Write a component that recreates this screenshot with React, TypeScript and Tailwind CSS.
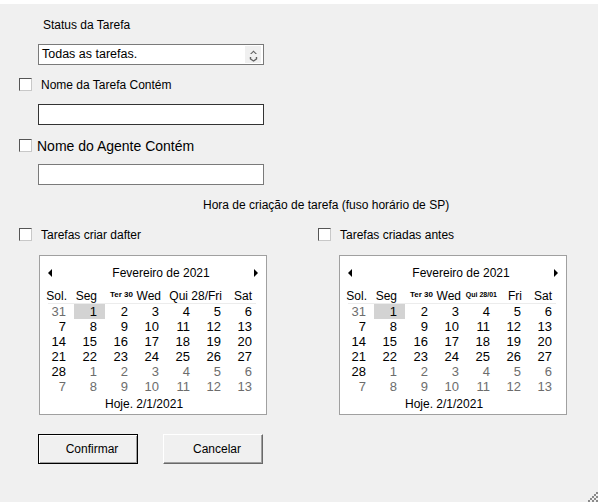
import React from "react";

type Day = { n: number; muted?: boolean; selected?: boolean };

const weeks: Day[][] = [
  [{ n: 31, muted: true }, { n: 1, selected: true }, { n: 2 }, { n: 3 }, { n: 4 }, { n: 5 }, { n: 6 }],
  [{ n: 7 }, { n: 8 }, { n: 9 }, { n: 10 }, { n: 11 }, { n: 12 }, { n: 13 }],
  [{ n: 14 }, { n: 15 }, { n: 16 }, { n: 17 }, { n: 18 }, { n: 19 }, { n: 20 }],
  [{ n: 21 }, { n: 22 }, { n: 23 }, { n: 24 }, { n: 25 }, { n: 26 }, { n: 27 }],
  [
    { n: 28 },
    { n: 1, muted: true },
    { n: 2, muted: true },
    { n: 3, muted: true },
    { n: 4, muted: true },
    { n: 5, muted: true },
    { n: 6, muted: true },
  ],
  [
    { n: 7, muted: true },
    { n: 8, muted: true },
    { n: 9, muted: true },
    { n: 10, muted: true },
    { n: 11, muted: true },
    { n: 12, muted: true },
    { n: 13, muted: true },
  ],
];

function Checkbox() {
  return (
    <span className="block w-[13px] h-[13px] bg-white border border-t-[#555] border-l-[#555] border-b-[#c8c8c8] border-r-[#c8c8c8]" />
  );
}

function CheckRow({ label, big }: { label: string; big?: boolean }) {
  return (
    <div className="flex items-center h-[13px]">
      <Checkbox />
      <span className={big ? "ml-[5px] text-[14px] leading-[16px]" : "ml-[9px] leading-[14px]"}>{label}</span>
    </div>
  );
}

function Arrow({ dir }: { dir: "left" | "right" }) {
  return (
    <svg width="5" height="8" viewBox="0 0 5 8">
      {dir === "left" ? <path d="M4 0 L0 4 L4 8 Z" fill="#000" /> : <path d="M1 0 L5 4 L1 8 Z" fill="#000" />}
    </svg>
  );
}

function Calendar({ variant }: { variant: "a" | "b" }) {
  return (
    <div className="w-[228px] h-[160px] bg-white border border-[#a0a0a0] pl-[3px]">
      <div className="mt-[10px] h-[14px] leading-[14px] flex items-center justify-between pl-[5px] pr-[8px]">
        <Arrow dir="left" />
        <span className="pl-[16px]">Fevereiro de 2021</span>
        <Arrow dir="right" />
      </div>
      <div className="mt-[10px] grid grid-cols-[repeat(7,31px)] h-[13px] leading-[13px] items-end whitespace-nowrap">
        <div className="flex justify-end pr-[7px]">Sol.</div>
        <div className="flex justify-end pr-[8px]">Seg</div>
        <div className="flex justify-end pr-[3px] self-start text-[8px] leading-[9px] font-bold">Ter 30</div>
        <div className="flex justify-end pr-[6px]">Wed</div>
        {variant === "a" ? (
          <div className="col-span-2 flex justify-end pr-[7px]">Qui 28/Fri</div>
        ) : (
          <>
            <div className="flex justify-end pr-[1px] self-start text-[7px] leading-[9px] font-bold">Qui 28/01</div>
            <div className="flex justify-end pr-[7px]">Fri</div>
          </>
        )}
        <div className="flex justify-end pr-[8px]">Sat</div>
      </div>
      <div className="ml-[5px] w-[208px] h-px bg-[#ececec]" />
      {weeks.map((week, i) => (
        <div key={i} className="grid grid-cols-[repeat(7,31px)] h-[15px] leading-[15px] text-[13px]">
          {week.map((d, j) => (
            <div
              key={j}
              className={
                "text-right pr-[8px] " +
                (d.selected ? "bg-[#d3d3d3] " : "") +
                (d.muted ? "text-[#6d6d6d]" : "text-black")
              }
            >
              {d.n}
            </div>
          ))}
        </div>
      ))}
      <div className="mt-[3px] h-[14px] leading-[14px] pl-[62px]">Hoje. 2/1/2021</div>
    </div>
  );
}

export default function App() {
  return (
    <div
      className="relative w-[598px] h-[502px] overflow-hidden bg-[#f0f0f0] border-t-4 border-white text-[12px] text-black"
      style={{ fontFamily: '"Liberation Sans", Arial, sans-serif' }}
    >
      <div className="flex flex-col">
        <div className="mt-[14px] h-[14px] leading-[14px] pl-[43px]">Status da Tarefa</div>

        <div className="mt-[12px] ml-[38px] w-[226px] h-[21px] bg-white border border-[#7a7a7a] flex items-center">
          <span className="pl-[3px] text-[12.5px] leading-[15px] flex-1">Todas as tarefas.</span>
          <div className="w-[16px] h-[17px] mr-[2px] bg-[#f0f0f0] flex items-center justify-center">
            <svg width="9" height="14" viewBox="0 0 9 14">
              <path d="M1 6 L4.5 2.5 L8 6 L6.5 6 L4.5 4 L2.5 6 Z" fill="#606060" />
              <path d="M1.5 9 L1.5 11 L4.5 13 L7.5 11 L7.5 9" fill="none" stroke="#606060" strokeWidth="1.4" />
            </svg>
          </div>
        </div>

        <div className="mt-[13px] ml-[19px]">
          <CheckRow label="Nome da Tarefa Contém" />
        </div>
        <div className="mt-[13px] ml-[38px] w-[226px] h-[21px] bg-white border border-[#333]" />

        <div className="mt-[14px] ml-[19px]">
          <CheckRow label="Nome do Agente Contém" big />
        </div>
        <div className="mt-[12px] ml-[38px] w-[226px] h-[21px] bg-white border border-[#7a7a7a]" />

        <div className="mt-[13px] h-[14px] leading-[14px] pl-[203px]">
          Hora de criação de tarefa (fuso horário de SP)
        </div>

        <div className="mt-[16px] flex">
          <div className="ml-[19px] w-[299px]">
            <CheckRow label="Tarefas criar dafter" />
          </div>
          <CheckRow label="Tarefas criadas antes" />
        </div>

        <div className="mt-[14px] flex gap-[72px] ml-[39px]">
          <Calendar variant="a" />
          <Calendar variant="b" />
        </div>

        <div className="mt-[19px] ml-[38px] flex gap-[25px]">
          <button
            type="button"
            className="w-[100px] h-[30px] bg-[#f0f0f0] border border-black shadow-[inset_1px_1px_0_#fff,inset_-1px_-1px_0_#a0a0a0] pl-[8px]"
          >
            Confirmar
          </button>
          <button
            type="button"
            className="w-[100px] h-[30px] bg-[#f0f0f0] border border-t-white border-l-white border-b-[#696969] border-r-[#696969] shadow-[inset_-1px_-1px_0_#a0a0a0] pl-[8px]"
          >
            Cancelar
          </button>
        </div>
      </div>

      {/* window size grip */}
      <svg className="absolute right-0 bottom-0" width="12" height="12" viewBox="0 0 12 12">
        {[
          [10, 2], [8, 4], [6, 6], [4, 8], [2, 10],
          [10, 6], [8, 8], [6, 10],
          [10, 10],
        ].map(([x, y], i) => (
          <rect key={i} x={x} y={y} width="2" height="2" fill="#8a8a8a" />
        ))}
      </svg>
    </div>
  );
}
